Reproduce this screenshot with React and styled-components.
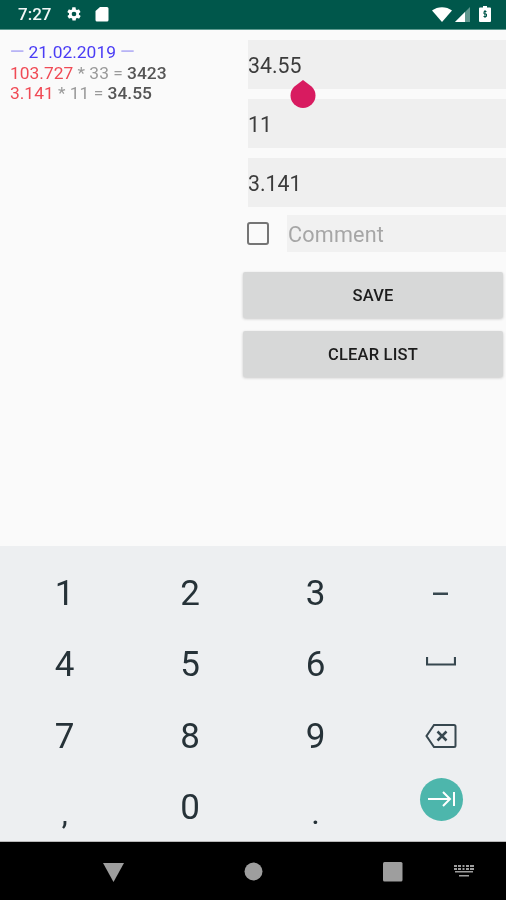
import React from "react";
import styled, { createGlobalStyle } from "styled-components";

const Global = createGlobalStyle`
  html, body { margin: 0; padding: 0; background: #fafafa; }
  * { box-sizing: border-box; }
`;
const Screen = styled.div`
  width: 506px; height: 900px; overflow: hidden; display: flex; flex-direction: column;
  font-family: Roboto, "Liberation Sans", sans-serif; background: #fafafa; filter: blur(0.4px);
`;
const StatusBar = styled.div`
  height: 30px; flex: none; background: #00574b; border-bottom: 1px solid #5d9a8f;
  display: flex; align-items: center; padding: 0 15px 1px 18px; color: #fff;
`;
const Clock = styled.span` font-size: 17px; font-weight: 500; color: #f2f7f6; `;
const StatusLeft = styled.div` display: flex; align-items: center; gap: 13px; `;
const StatusRight = styled.div` margin-left: auto; display: flex; align-items: center; gap: 3px; `;
const Content = styled.main` flex: none; height: 516px; display: flex; background: #fafafa; `;
const Log = styled.section` width: 242px; flex: none; padding: 12px 0 0 10px; font-size: 17.4px; line-height: 20.5px; `;
const DateLine = styled.div` color: #4a3cf5; `;
const Dash = styled.span` color: #b8b4f5; font-weight: 500; font-size: 18.5px; `;
const LogLine = styled.div` color: #9a9a9a; `;
const Red = styled.span` color: #f04a55; `;
const Dark = styled.span` color: #555; font-weight: 500; `;
const Form = styled.section` flex: 1; padding: 10px 3px 0 0; display: flex; flex-direction: column; position: relative; `;
const Field = styled.div`
  margin-left: 6px; margin-right: -3px; height: ${p => p.$h}px; margin-bottom: ${p => p.$mb}px; background: #efefef;
  display: flex; align-items: center; font-size: 21.3px; color: #3c3c3c; padding-top: ${p => p.$pt || 0}px;
`;
const Handle = styled.svg` position: absolute; left: 48px; top: 50px; `;
const CommentRow = styled.div` display: flex; align-items: center; height: 37px; margin: 0 -3px 20px 5px; `;
const Box = styled.div` width: 22px; height: 23px; border: 2px solid #757575; border-radius: 3px; flex: none; `;
const Comment = styled.div`
  margin-left: 18px; flex: 1; height: 37px; background: #f1f1f1; color: #a6a6a6; font-size: 21.6px;
  display: flex; align-items: center; letter-spacing: 0.2px; padding: 2px 0 0 1px;
`;
const Btn = styled.div`
  height: 46px; margin: 0 0 13px 1px; background: #d7d8d8; border-radius: 2px; color: #1c1c1c;
  font-size: 16.5px; font-weight: 500; display: flex; align-items: center; justify-content: center;
  box-shadow: 0 1px 3px rgba(0,0,0,.2); letter-spacing: 0.2px;
`;
const Keyboard = styled.div`
  flex: none; height: 295px; background: #edeff1; padding: 12px 2px 0 2px;
  display: grid; grid-template-columns: repeat(4, 125.4px); grid-template-rows: repeat(4, 71.3px);
`;
const Key = styled.div`
  display: flex; align-items: center; justify-content: center; font-size: 35px; font-weight: 400; color: #263238;
`;
const PunctKey = styled(Key)` padding-top: ${p => p.$pt}px; font-size: 27px; font-weight: 500; `;
const GoCircle = styled.div`
  width: 43px; height: 43px; border-radius: 50%; background: #4db6ac; display: flex; align-items: center; justify-content: center;
  margin: -17px 0 0 2px;
`;
const NavBar = styled.div`
  flex: 1; background: #000; border-top: 1px solid #b8b8b8; position: relative;
`;
const NavItem = styled.div`
  position: absolute; left: ${p => p.$x}px; top: ${p => p.$y}px; display: flex;
`;

const digits = ["1","2","3",null,"4","5","6",null,"7","8","9",null];

export default function App() {
  return (
    <Screen>
      <Global />
      <StatusBar>
        <StatusLeft>
          <Clock>7:27</Clock>
          <svg width="16" height="16" viewBox="0 0 24 24" fill="#fff" style={{marginLeft:2}}><path d="M19.4 13c0-.3.1-.6.1-1s0-.7-.1-1l2.100-1.600c.2-.2.2-.4.1-.6l-2-3.500c-.1-.2-.4-.3-.6-.2l-2.500 1c-.5-.4-1.100-.7-1.700-1l-.4-2.600c0-.3-.2-.5-.5-.5h-4c-.3 0-.5.2-.5.4l-.4 2.700c-.6.2-1.100.6-1.700 1l-2.500-1c-.2-.1-.5 0-.6.2l-2 3.500c-.1.2-.1.5.1.6L4.600 11c0 .3-.1.7-.1 1s0 .7.1 1l-2.100 1.600c-.2.2-.2.4-.1.6l2 3.500c.1.2.4.3.6.2l2.500-1c.5.4 1.100.7 1.700 1l.4 2.600c0 .3.2.4.5.4h4c.3 0 .5-.2.5-.4l.4-2.600c.6-.3 1.200-.6 1.700-1l2.500 1c.2.1.5 0 .6-.2l2-3.500c.1-.2.1-.5-.1-.6L19.400 13zM12 15.500A3.500 3.500 0 1 1 12 8.500a3.500 3.500 0 0 1 0 7z"/></svg>
          <svg width="14" height="16" viewBox="0 0 14 16" fill="#fff"><path d="M5 1h7a1.500 1.500 0 0 1 1.500 1.500v11.500a1.500 1.500 0 0 1-1.500 1.500h-10a1.500 1.500 0 0 1-1.500-1.500v-9z"/></svg>
        </StatusLeft>
        <StatusRight>
          <svg width="20" height="15" viewBox="0 0 20 15" fill="#fff"><path d="M0 3.500C5.500-1 14.500-1 20 3.500L10 15z"/></svg>
          <svg width="15" height="15" viewBox="0 0 15 15"><path d="M15 0V15H0z" fill="#5f978e"/><path d="M10 5V15H0z" fill="#fff"/></svg>
          <svg width="12" height="16" viewBox="0 0 12 16" style={{marginLeft:6}}><path d="M4 0h4v1.500h3a1 1 0 0 1 1 1V15a1 1 0 0 1-1 1H1a1 1 0 0 1-1-1V2.500a1 1 0 0 1 1-1h3z" fill="#fff"/><path d="M7.500 5.500H5v2.500h2.500v2.500H4.500M6 4v8" stroke="#00574b" strokeWidth="1" fill="none"/></svg>
        </StatusRight>
      </StatusBar>
      <Content>
        <Log>
          <DateLine><Dash>—</Dash> 21.02.2019 <Dash>—</Dash></DateLine>
          <LogLine><Red>103.727</Red> * 33 = <Dark>3423</Dark></LogLine>
          <LogLine><Red>3.141</Red> * 11 = <Dark>34.55</Dark></LogLine>
        </Log>
        <Form>
          <Field $h={49} $mb={10} $pt={1}>34.55</Field>
          <Field $h={49} $mb={10} $pt={2}>11</Field>
          <Field $h={49} $mb={8} $pt={1}>3.141</Field>
          <CommentRow>
            <Box />
            <Comment>Comment</Comment>
          </CommentRow>
          <Btn>SAVE</Btn>
          <Btn>CLEAR LIST</Btn>
          <Handle width="26" height="28" viewBox="0 0 26 28"><path d="M13 0L21.840 6.660A12.500 12.500 0 1 1 4.160 6.660z" fill="#d81b60"/></Handle>
        </Form>
      </Content>
      <Keyboard>
        {digits.map((d, i) => d ? <Key key={i}>{d}</Key> : (
          <Key key={i}>
            {i === 3 && <svg width="16" height="4" viewBox="0 0 16 4"><rect y="0.500" width="15" height="2.500" fill="#37474f"/></svg>}
            {i === 7 && <svg width="30" height="9" viewBox="0 0 30 9" fill="none" style={{marginTop:-6}}><path d="M1 0V7.500H29V0" stroke="#37474f" strokeWidth="2.200"/></svg>}
            {i === 11 && <svg width="32" height="26" viewBox="0 0 32 26" fill="none" stroke="#37474f" strokeWidth="2"><path d="M9 2H29a1.500 1.500 0 0 1 1.500 1.500V22.500A1.500 1.500 0 0 1 29 24H9L1.500 13z"/><path d="M12.500 8.500L21.500 17.500M21.500 8.500L12.500 17.500" strokeWidth="2.500"/></svg>}
          </Key>
        ))}
        <PunctKey $pt={14}>,</PunctKey>
        <Key>0</Key>
        <PunctKey $pt={14}>.</PunctKey>
        <Key>
          <GoCircle>
            <svg width="28" height="18" viewBox="0 0 28 18" fill="none" stroke="#fff" strokeWidth="2"><path d="M0 9H22M15 2L22 9L15 16M26 2V16"/></svg>
          </GoCircle>
        </Key>
      </Keyboard>
      <NavBar>
        <NavItem $x={103} $y={21}><svg width="21" height="19" viewBox="0 0 21 19"><path d="M0 0H21L10.500 19z" fill="#9e9e9e"/></svg></NavItem>
        <NavItem $x={244} $y={20}><svg width="19" height="19"><circle cx="9.500" cy="9.500" r="9" fill="#9e9e9e"/></svg></NavItem>
        <NavItem $x={383} $y={20}><svg width="20" height="20"><rect width="19.500" height="19.500" rx="1.500" fill="#9e9e9e"/></svg></NavItem>
        <NavItem $x={454} $y={23}><svg width="20" height="13" viewBox="0 0 20 13" fill="#9e9e9e"><path d="M0 0h3v2H0zM4 0h3v2H4zM8.500 0h2v2h-2zM12 0h3v2h-3zM16 0h4v2h-4zM0 3h3v2H0zM4 3h3v2H4zM8.500 3h2v2h-2zM12 3h3v2h-3zM16 3h4v2h-4zM1 6h18v1.500H1zM5 10h10v1.500H5z"/></svg></NavItem>
      </NavBar>
    </Screen>
  );
}
